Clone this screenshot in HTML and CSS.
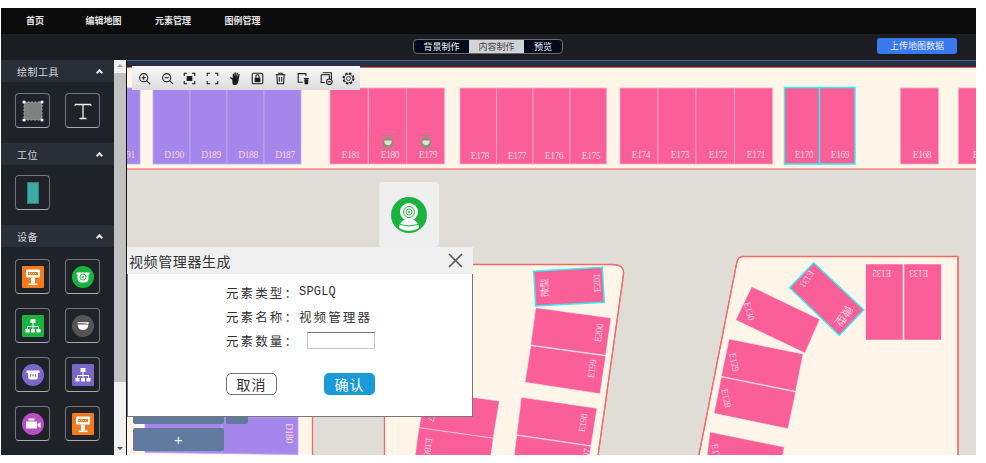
FILE: index.html
```html
<!DOCTYPE html>
<html lang="zh">

<head>
    <meta charset="UTF-8">
    <title>编辑地图</title>
    <link rel="stylesheet" href="styles.css">
</head>

<body>

    <svg class="defs" width="0" height="0">
        <symbol id="kiosk" viewBox="0 0 22 22">
            <rect x="4" y="3.500" width="14" height="8" rx="1" fill="#fff"/>
            <rect x="6" y="6" width="10" height="3" fill="#f47a1c"/>
            <path d="M7 7.500h8" stroke="#fff" stroke-dasharray="1 1"/>
            <rect x="9" y="11.500" width="4" height="6" fill="#fff"/>
            <rect x="6.500" y="17.500" width="9" height="1.600" fill="#fff"/>
        </symbol>
        <symbol id="tree" viewBox="0 0 22 22">
            <rect x="8.500" y="4" width="5" height="4" fill="#fff"/>
            <path d="M11 8v3M5.500 14v-2.500h11V14M11 11v3" stroke="#fff" fill="none"/>
            <rect x="3.500" y="14" width="4" height="3.500" fill="#fff"/>
            <rect x="9" y="14" width="4" height="3.500" fill="#fff"/>
            <rect x="14.500" y="14" width="4" height="3.500" fill="#fff"/>
        </symbol>
    </svg>

    <div class="app">
        <div class="nav">
            <a class="nav-item nav-home">首页</a>
            <a class="nav-item">编辑地图</a>
            <a class="nav-item">元素管理</a>
            <a class="nav-item">图例管理</a>
        </div>

        <div class="subbar">
            <div class="modes">
                <span class="mode mode-a">背景制作</span>
                <span class="mode mode-b active">内容制作</span>
                <span class="mode mode-c">预览</span>
            </div>
            <button class="upload">上传地图数据</button>
        </div>

        <div class="main">
            <div class="side">
                <div class="side-scroll">
                    <div class="side-head"><span>绘制工具</span><i class="chev"></i></div>
                    <div class="tools tools-first">
                        <div class="tool">
                            <svg width="24" height="24" viewBox="0 0 24 24">
                                <rect x="3" y="3" width="18" height="18" fill="#808080"/>
                                <rect x="3" y="3" width="18" height="18" fill="none" stroke="#a8a8a8" stroke-dasharray="2 1.500"/>
                                <circle cx="3" cy="3" r="1.600" fill="#fff"/><circle cx="21" cy="3" r="1.600" fill="#fff"/>
                                <circle cx="3" cy="21" r="1.600" fill="#fff"/><circle cx="21" cy="21" r="1.600" fill="#fff"/>
                            </svg>
                        </div>
                        <div class="tool">
                            <svg width="24" height="24" viewBox="0 0 24 24">
                                <path d="M4 5.500h16M12 5.500v14M8.500 19.500h7" stroke="#eee" stroke-width="1.300" fill="none"/>
                                <path d="M4 5.500v1.500M20 5.500v1.500" stroke="#eee" fill="none"/>
                            </svg>
                        </div>
                    </div>

                    <div class="side-head"><span>工位</span><i class="chev"></i></div>
                    <div class="tools tools-second">
                        <div class="tool">
                            <svg width="24" height="24" viewBox="0 0 24 24">
                                <rect x="6.500" y="1.500" width="11" height="21" fill="#3fa9a5" stroke="#2f7f80"/>
                            </svg>
                        </div>
                    </div>

                    <div class="side-head"><span>设备</span><i class="chev"></i></div>
                    <div class="tools tools-third">
                        <div class="tool"><div class="badge sq orange"><svg width="22" height="22"><use href="#kiosk"/></svg></div></div>
                        <div class="tool"><div class="badge green">
                            <svg width="22" height="22" viewBox="0 0 22 22">
                                <path d="M4.500 6.500h13v2h-1v3.500q0 4-3.500 4.500h-4Q5.500 16 5.500 12V8.500h-1z" fill="#fff"/>
                                <circle cx="11" cy="11" r="3" fill="none" stroke="#1bb33f"/>
                                <circle cx="11" cy="11" r="1" fill="#1bb33f"/>
                            </svg>
                        </div></div>
                        <div class="tool"><div class="badge sq green"><svg width="22" height="22"><use href="#tree"/></svg></div></div>
                        <div class="tool"><div class="badge gray">
                            <svg width="22" height="22" viewBox="0 0 22 22">
                                <path d="M5.500 7.500h11v1.500h-1.500v-.5M5.500 9.500h11q-.6 5.500-5.500 5.500t-5.500-5.500z" fill="#fff"/>
                                <rect x="5.500" y="7" width="11" height="1.300" fill="#ddd"/>
                            </svg>
                        </div></div>
                        <div class="tool"><div class="badge purple">
                            <svg width="22" height="22" viewBox="0 0 22 22">
                                <path d="M4.500 6.500h13v2.500h-1.500v4q0 2.500-2.500 2.500h-5Q6 15.500 6 13V9H4.500z" fill="#fff"/>
                                <path d="M8.500 10v2.500M11 10v2.500M13.500 10v2.500" stroke="#7c66c8"/>
                            </svg>
                        </div></div>
                        <div class="tool"><div class="badge sq purple"><svg width="22" height="22"><use href="#tree"/></svg></div></div>
                        <div class="tool"><div class="badge magenta">
                            <svg width="22" height="22" viewBox="0 0 22 22">
                                <rect x="4" y="8.500" width="11" height="7" fill="#fff"/>
                                <rect x="6.500" y="5.500" width="6" height="2" fill="#fff"/>
                                <path d="M15.500 11l3-2v6l-3-2z" fill="#fff"/>
                            </svg>
                        </div></div>
                        <div class="tool"><div class="badge sq orange"><svg width="22" height="22"><use href="#kiosk"/></svg></div></div>
                    </div>
                </div>
                <div class="scrollbar">
                    <i class="arrow up"></i>
                    <div class="thumb"></div>
                    <i class="arrow down"></i>
                </div>
            </div>

            <div class="map">
                <svg class="plan" width="849" height="395" viewBox="127 60 849 395">
                    <!-- ground -->
                    <rect x="127" y="60" width="849" height="395" fill="#e0ddd6"/>
                    <rect x="127" y="60" width="849" height="7" fill="#2a3040"/>
                    <path d="M127 60.500h849" stroke="#3b66ab"/>
                    <rect class="floor" x="120" y="67.500" width="870" height="101.500"/>
                    <rect class="floor" x="120" y="380" width="192.500" height="90"/>
                    <path class="floor" d="M384.500 264.500H612q13 0 11.500 10L596 470H384.500z"/>
                    <path class="floor" d="M743 256.500H958V470H696L736.500 264q1-7.500 6.500-7.500z"/>

                    <!-- top row -->
                    <g class="purple-shop">
                        <rect x="120" y="88" width="20" height="76"/>
                        <rect x="153" y="88" width="37" height="76"/>
                        <rect x="190" y="88" width="37" height="76"/>
                        <rect x="227" y="88" width="37" height="76"/>
                        <rect x="264" y="88" width="37" height="76"/>
                    </g>
                    <g class="pink-shop">
                        <rect x="330" y="88" width="38" height="76"/>
                        <rect x="368.500" y="88" width="38" height="76"/>
                        <rect x="406.500" y="88" width="38" height="76"/>
                        <rect x="460" y="88" width="36.500" height="76"/>
                        <rect x="496.500" y="88" width="36.500" height="76"/>
                        <rect x="533" y="88" width="37" height="76"/>
                        <rect x="570" y="88" width="36.500" height="76"/>
                        <rect x="620" y="88" width="38" height="76"/>
                        <rect x="658" y="88" width="38" height="76"/>
                        <rect x="696" y="88" width="38.500" height="76"/>
                        <rect x="734.500" y="88" width="38" height="76"/>
                        <rect x="900.500" y="88" width="38" height="76"/>
                        <rect x="958.500" y="88" width="30" height="76"/>
                    </g>
                    <g class="picked">
                        <rect x="784.500" y="87.500" width="35" height="76.500"/>
                        <rect x="819.500" y="87.500" width="35.500" height="76.500"/>
                    </g>
                    <g class="lbl">
                        <text x="125" y="158">D191</text><text x="174" y="158">D190</text><text x="211" y="158">D189</text>
                        <text x="248" y="158">D188</text><text x="285" y="158">D187</text>
                        <text x="351" y="158">E181</text><text x="390" y="158">E180</text><text x="428" y="158">E179</text>
                        <text x="480" y="159">E178</text><text x="517" y="159">E177</text><text x="554" y="159">E176</text><text x="591" y="159">E175</text>
                        <text x="641" y="158">E174</text><text x="680" y="158">E173</text><text x="718" y="158">E172</text><text x="756" y="158">E171</text>
                        <text x="804" y="158">E170</text><text x="840" y="158">E169</text><text x="922" y="158">E168</text><text x="982" y="158">E167</text>
                    </g>

                    <!-- markers -->
                    <g>
                        <path d="M382 135.500h12M420 135.500h12" stroke="#8a8a8a" stroke-width=".6"/>
                        <circle cx="388" cy="142.500" r="5.300" fill="#7c9a6f"/>
                        <circle cx="426" cy="142.500" r="5.300" fill="#7c9a6f"/>
                        <path d="M384.500 140.500h7v2.500l-2 2h-3l-2-2zM422.500 140.500h7v2.500l-2 2h-3l-2-2z" fill="#f3d9df"/>
                    </g>

                    <!-- left block -->
                    <path class="wall" d="M312.500 380V470M384.500 264V470"/>
                    <path class="purple-shop" d="M145 417H222V453.500L145 452.500z"/>
                    <path class="purple-shop" d="M222 417H298V454.500L222 453.500z"/>
                    <text class="lbl" transform="translate(289 433) rotate(90)" y="3">D180</text>

                    <!-- middle block -->
                    <path class="wall" d="M384.500 264.500H612q13 0 11.500 10L596 470"/>
                    <g class="pink-shop solid">
                        <path d="M426 391L499.300 401L493.300 438.300L419 427.700z"/>
                        <path d="M419 427.700L493.300 438.300L489 470L413 470z"/>
                        <path d="M535.700 307.700L611 318L605.700 355.300L530.700 345z"/>
                        <path d="M530.700 345.700L605.700 356L600 393.700L525 382.300z"/>
                        <path d="M521.300 397.300L597 408.300L591 445.700L516.700 434.700z"/>
                        <path d="M516.700 435.300L591 446.300L585 480L511 480z"/>
                    </g>
                    <path class="picked" d="M533.700 271.300L602.300 267.300L604.300 302.300L535.700 306z"/>
                    <g class="lbl">
                        <text transform="translate(597 283) rotate(-93)" y="3">E201</text>
                        <text transform="translate(545 288) rotate(-93)" y="3">微型</text>
                        <text transform="translate(599 333) rotate(-82)" y="3">E200</text>
                        <text transform="translate(592 369) rotate(-82)" y="3">E199</text>
                        <text transform="translate(583 423) rotate(-82)" y="3">E198</text>
                        <text transform="translate(586 458) rotate(-82)" y="3">E197</text>
                        <text transform="translate(428 447) rotate(98)" y="3">E186</text>
                        <text transform="translate(432 412) rotate(98)" y="3">E187</text>
                    </g>

                    <!-- right block -->
                    <path class="wall" d="M958 470V256.500H743q-5.500 0-6.500 7.500L696 470"/>
                    <g class="pink-shop solid">
                        <path d="M751.700 286.700L819.700 319.300L805 353L735.700 320z"/>
                        <path d="M729 339L803 354L795.700 391.300L721.300 376.300z"/>
                        <path d="M721.300 377L795.700 392L788 428.700L714 413.300z"/>
                        <path d="M710 432L784.300 447L778 480L704 480z"/>
                        <rect x="865.700" y="264" width="37.300" height="76"/>
                        <rect x="904" y="264" width="37.300" height="76"/>
                    </g>
                    <path class="picked" d="M813.700 262.700L863.700 309.700L839.300 335.300L789.700 287.700z"/>
                    <g class="lbl">
                        <text transform="translate(807 279) rotate(122)" y="3">E131</text>
                        <text class="lbl-big" transform="translate(844 316) rotate(125)" y="4">微型</text>
                        <text transform="translate(749 311) rotate(76)" y="3">E130</text>
                        <text transform="translate(734 362) rotate(78)" y="3">E129</text>
                        <text transform="translate(726 398) rotate(78)" y="3">E128</text>
                        <text transform="translate(716 453) rotate(78)" y="3">E127</text>
                        <text transform="translate(882 273) rotate(180)" y="3">E132</text>
                        <text transform="translate(919 273) rotate(180)" y="3">E133</text>
                    </g>
                </svg>

                <div class="slab slab-a"></div>
                <div class="slab slab-b"></div>
                <div class="slab slab-c">+</div>

                <div class="cam-card">
                    <svg width="36" height="36" viewBox="0 0 36 36">
                        <circle cx="18" cy="18" r="18" fill="#1bb33f"/>
                        <path d="M8 31c0-4 3-7 5-8h10c2 1 5 4 5 8a18 18 0 0 1-20 0z" fill="#fff"/>
                        <path d="M9 27.500q9 3 18 0" stroke="#1bb33f" fill="none"/>
                        <circle cx="18" cy="15" r="9" fill="#fff"/>
                        <circle cx="18" cy="15" r="5.500" fill="none" stroke="#1bb33f"/>
                        <circle cx="18" cy="15" r="3" fill="none" stroke="#1bb33f"/>
                        <circle cx="18" cy="15" r="1" fill="#1bb33f"/>
                    </svg>
                </div>

                <div class="toolbar">
                    <svg class="ti" viewBox="0 0 16 16"><circle cx="7" cy="7" r="5"/><path d="M10.500 10.500L15 15M4.500 7h5M7 4.500v5"/></svg>
                    <svg class="ti" viewBox="0 0 16 16"><circle cx="7" cy="7" r="5"/><path d="M10.500 10.500L15 15M4.500 7h5"/></svg>
                    <svg class="ti" viewBox="0 0 16 16"><path d="M1.500 5V1.500H5M11 1.500h3.500V5M14.500 11v3.500H11M5 14.500H1.500V11"/><rect class="fill" x="4.500" y="5" width="7" height="6"/></svg>
                    <svg class="ti" viewBox="0 0 16 16"><path d="M1.500 5V1.500H5M11 1.500h3.500V5M14.500 11v3.500H11M5 14.500H1.500V11"/></svg>
                    <svg class="ti" viewBox="1 1 12.500 14"><path class="fill" d="M3.500 9L1.200 7.500l.8-1 2.300 1.300V3l1.200-.2.300 3.700.3-5L7.500 1.400l.3 5 .7-4.700 1.200.2-.4 4.900 1.300-3.700 1.100.4-1 5.500c-.2 3.800-1.500 6-4.500 6S4.500 12 3.500 9z"/></svg>
                    <svg class="ti" viewBox="0 0 16 16"><rect x="1.500" y="1.500" width="13" height="13" rx="2"/><rect class="fill" x="4.500" y="7" width="7" height="5.500"/><path d="M6 7V5.500a2 2 0 0 1 4 0V7"/></svg>
                    <svg class="ti" viewBox="0 0 16 16"><path d="M2 3.500h12M6 3.500V1.500h4v2M3.500 3.500l.7 11h7.600l.7-11M6.500 6v6M9.500 6v6"/></svg>
                    <svg class="ti" viewBox="0 0 16 16"><path d="M7 12.500H1.500V2h9.500v3"/><path class="fill" d="M8.500 7.500h6v1h-6zM9 9h5l-.4 6H9.400z"/></svg>
                    <svg class="ti" viewBox="0 0 16 16"><path d="M3.500 1H14v8M1.500 3.500h10v5M6 13H1.500V3.500"/><circle cx="11.500" cy="12" r="3.500"/><path d="M9.500 12h4"/></svg>
                    <svg class="ti gear" viewBox="0 0 16 16"><circle cx="8" cy="8" r="2.500"/><circle cx="8" cy="8" r="5.300"/><circle class="teeth" cx="8" cy="8" r="6.500"/></svg>
                </div>

                <div class="dialog">
                    <div class="dialog-head">
                        <span class="dialog-title">视频管理器生成</span>
                        <svg class="dialog-close" width="15" height="15" viewBox="0 0 15 15"><path d="M1 1l13 13M14 1L1 14"/></svg>
                    </div>
                    <div class="dialog-body">
                        <div class="row"><span class="row-label">元素类型：</span><span class="row-value mono">SPGLQ</span></div>
                        <div class="row"><span class="row-label">元素名称：</span><span class="row-value">视频管理器</span></div>
                        <div class="row row-input"><span class="row-label">元素数量：</span><input class="count" type="text"></div>
                        <div class="actions">
                            <button class="btn btn-cancel">取消</button>
                            <button class="btn btn-ok">确认</button>
                        </div>
                    </div>
                </div>
            </div>
        </div>
    </div>

</body>

</html>
```

FILE: styles.css
```css
* {
    box-sizing: border-box;
}

html,
body {
    margin: 0;
    background: #fff;
    overflow: hidden;
}

body {
    font-family: "Noto Sans CJK SC", "Liberation Sans", sans-serif;
}

.defs {
    position: absolute;
}

.app {
    width: 975px;
    height: 447px;
    margin: 8px 0 0 1px;
    display: flex;
    flex-direction: column;
}

.nav {
    height: 26px;
    flex: none;
    background: #0b0b0b;
    display: flex;
    align-items: center;
    padding-left: 25px;
    gap: 33.500px;
}

.nav-item {
    color: #e4e4e4;
    font-size: 9px;
    font-weight: 700;
    line-height: 26px;
}

.nav-home {
    margin-right: 8px;
}

.subbar {
    height: 26px;
    flex: none;
    background: #1b1d22;
    position: relative;
    display: flex;
    align-items: flex-start;
    padding: 5px 19px 0 412px;
    justify-content: space-between;
}

.modes {
    display: flex;
    height: 15px;
    border: 1px solid #6a6d74;
    border-radius: 4px;
    background: #02091a;
    overflow: hidden;
}

.mode {
    font-size: 9px;
    line-height: 13px;
    color: #f4f4f4;
    text-align: center;
}

.mode-a {
    width: 55px;
}

.mode-b {
    width: 55px;
}

.mode-c {
    width: 38px;
}

.mode.active {
    background: #d2d3d7;
    color: #444;
}

.upload {
    width: 80px;
    height: 16px;
    margin-top: -1px;
    border: none;
    border-radius: 3px;
    background: #3a78ee;
    color: #e6ecfa;
    font-family: inherit;
    font-size: 9px;
    line-height: 16px;
    padding: 0;
}

.main {
    flex: 1;
    display: flex;
    min-height: 0;
}

.side {
    width: 126px;
    flex: none;
    display: flex;
    border-right: 1px solid #111;
}

.side-scroll {
    flex: 1;
    background: #1f2229;
}

.side-head {
    height: 22px;
    background: #2a2e37;
    color: #d4d6da;
    font-size: 10px;
    line-height: 21px;
    padding: 0 12px 0 16px;
    letter-spacing: 0.500px;
    display: flex;
    justify-content: space-between;
    align-items: center;
}

.chev {
    width: 5px;
    height: 5px;
    margin: 3px 0 0;
    border-top: 2px solid #e6e6e6;
    border-left: 2px solid #e6e6e6;
    transform: rotate(45deg);
}

.tools {
    display: grid;
    grid-template-columns: 35px 35px;
    gap: 14px 15px;
    padding: 0 0 0 14px;
}

.tools-first {
    padding-top: 11px;
    padding-bottom: 15px;
}

.tools-second {
    padding-top: 10px;
    padding-bottom: 15px;
}

.tools-third {
    padding-top: 12px;
}

.tool {
    width: 35px;
    height: 35px;
    border: 1px solid #74767c;
    border-bottom-color: #a9abaf;
    border-radius: 4px;
    display: flex;
    align-items: center;
    justify-content: center;
}

.badge {
    width: 22px;
    height: 22px;
    border-radius: 50%;
    display: block;
    flex: none;
}

.badge svg {
    display: block;
}

.badge.sq {
    border-radius: 1px;
}

.orange {
    background: #f47a1c;
}

.green {
    background: #1bb33f;
}

.gray {
    background: #555;
}

.purple {
    background: #7c66c8;
}

.magenta {
    background: #b84fc2;
}

.scrollbar {
    width: 12.500px;
    flex: none;
    background: #f1f1f1;
    display: flex;
    flex-direction: column;
    align-items: center;
}

.thumb {
    width: 100%;
    height: 309px;
    background: #c1c1c1;
    margin-top: 6px;
}

.arrow {
    width: 0;
    height: 0;
    border-left: 3px solid transparent;
    border-right: 3px solid transparent;
}

.arrow.up {
    border-bottom: 3px solid #a3a3a3;
    margin-top: 4px;
}

.arrow.down {
    border-top: 3px solid #505050;
    margin-top: 65px;
}

.map {
    position: relative;
    flex: 1;
    overflow: hidden;
}

.plan {
    display: block;
}

.floor {
    fill: #fff6e9;
    stroke: #f0585a;
    stroke-width: 1;
}

.wall {
    fill: none;
    stroke: #f56a68;
    stroke-width: 1.300;
}

.purple-shop {
    fill: #a586ea;
    stroke: #c2aaf2;
    stroke-width: 0.800;
}

.pink-shop {
    fill: #fa5f97;
    stroke: #ffa8c6;
    stroke-width: 0.800;
}

.pink-shop.solid {
    stroke: #fff0f0;
    stroke-width: 0.500;
}

.picked {
    fill: #fa5f97;
    stroke: #35eef0;
    stroke-width: 1.500;
}

.lbl {
    font-family: "Liberation Serif", "Noto Sans CJK SC", serif;
    font-size: 9.500px;
    letter-spacing: -0.400px;
    fill: #ffd4e2;
    text-anchor: middle;
}

.lbl-big {
    font-size: 11px;
    letter-spacing: 0;
}

.slab {
    position: absolute;
    background: #627a9d;
    border-radius: 2px;
}

.slab-a {
    left: 6px;
    top: 340px;
    width: 91px;
    height: 24px;
}

.slab-b {
    left: 99px;
    top: 340px;
    width: 22px;
    height: 24px;
}

.slab-c {
    left: 6px;
    top: 368px;
    width: 91px;
    height: 23px;
    color: #e8edf4;
    font-family: "Liberation Sans", sans-serif;
    font-size: 15px;
    line-height: 23px;
    text-align: center;
}

.cam-card {
    position: absolute;
    left: 252px;
    top: 122px;
    width: 60px;
    height: 65px;
    background: #efefef;
    border-radius: 4px;
    display: flex;
    align-items: center;
    justify-content: center;
}

.toolbar {
    position: absolute;
    left: 5px;
    top: 6px;
    width: 228px;
    height: 24px;
    background: linear-gradient(#f9f9f9, #dcdcdc);
    display: flex;
    align-items: center;
    padding-left: 6px;
    gap: 9.700px;
}

.ti {
    width: 13px;
    height: 13px;
    fill: none;
    stroke: #1a1a1a;
    stroke-width: 1.300;
    flex: none;
}

.ti .fill {
    fill: #1a1a1a;
    stroke: none;
}

.gear {
    stroke-width: 1;
}

.ti .teeth {
    stroke-width: 1.800;
    stroke-dasharray: 3 2.100;
}

.dialog {
    position: absolute;
    left: 0;
    top: 187px;
    width: 346px;
    height: 170px;
    background: #fff;
    border: 1px solid #777;
    border-top: none;
}

.dialog-head {
    height: 27px;
    margin-left: -1px;
    margin-right: -1px;
    background: #f0f0f0;
    display: flex;
    align-items: center;
    justify-content: space-between;
    padding: 0 10px 0 2px;
}

.dialog-title {
    font-size: 14px;
    letter-spacing: 0.600px;
    color: #333;
}

.dialog-close {
    fill: none;
    stroke: #555;
    stroke-width: 1.600;
}

.dialog-body {
    padding: 6px 0 0 98px;
}

.row {
    height: 24.300px;
    display: flex;
    align-items: center;
    font-size: 12.500px;
    letter-spacing: 2.100px;
    color: #333;
}

.row-label {
    width: 73px;
}

.mono {
    font-family: "Liberation Mono", monospace;
    font-size: 12px;
    letter-spacing: 0.200px;
}

.count {
    width: 68px;
    height: 17px;
    margin-left: 8px;
    border: 1px solid #c8c8c8;
    border-top-color: #777;
    background: #fff;
    padding: 0;
}

.actions {
    display: flex;
    justify-content: space-between;
    width: 149px;
    margin-top: 20px;
}

.btn {
    width: 51px;
    height: 22px;
    border-radius: 5px;
    font-family: inherit;
    font-size: 14px;
    line-height: 20px;
    letter-spacing: 1px;
    padding: 0;
}

.btn-cancel {
    background: #fff;
    border: 1px solid #777;
    color: #333;
}

.btn-ok {
    background: #1a9bd7;
    border: none;
    color: #fff;
}
```
